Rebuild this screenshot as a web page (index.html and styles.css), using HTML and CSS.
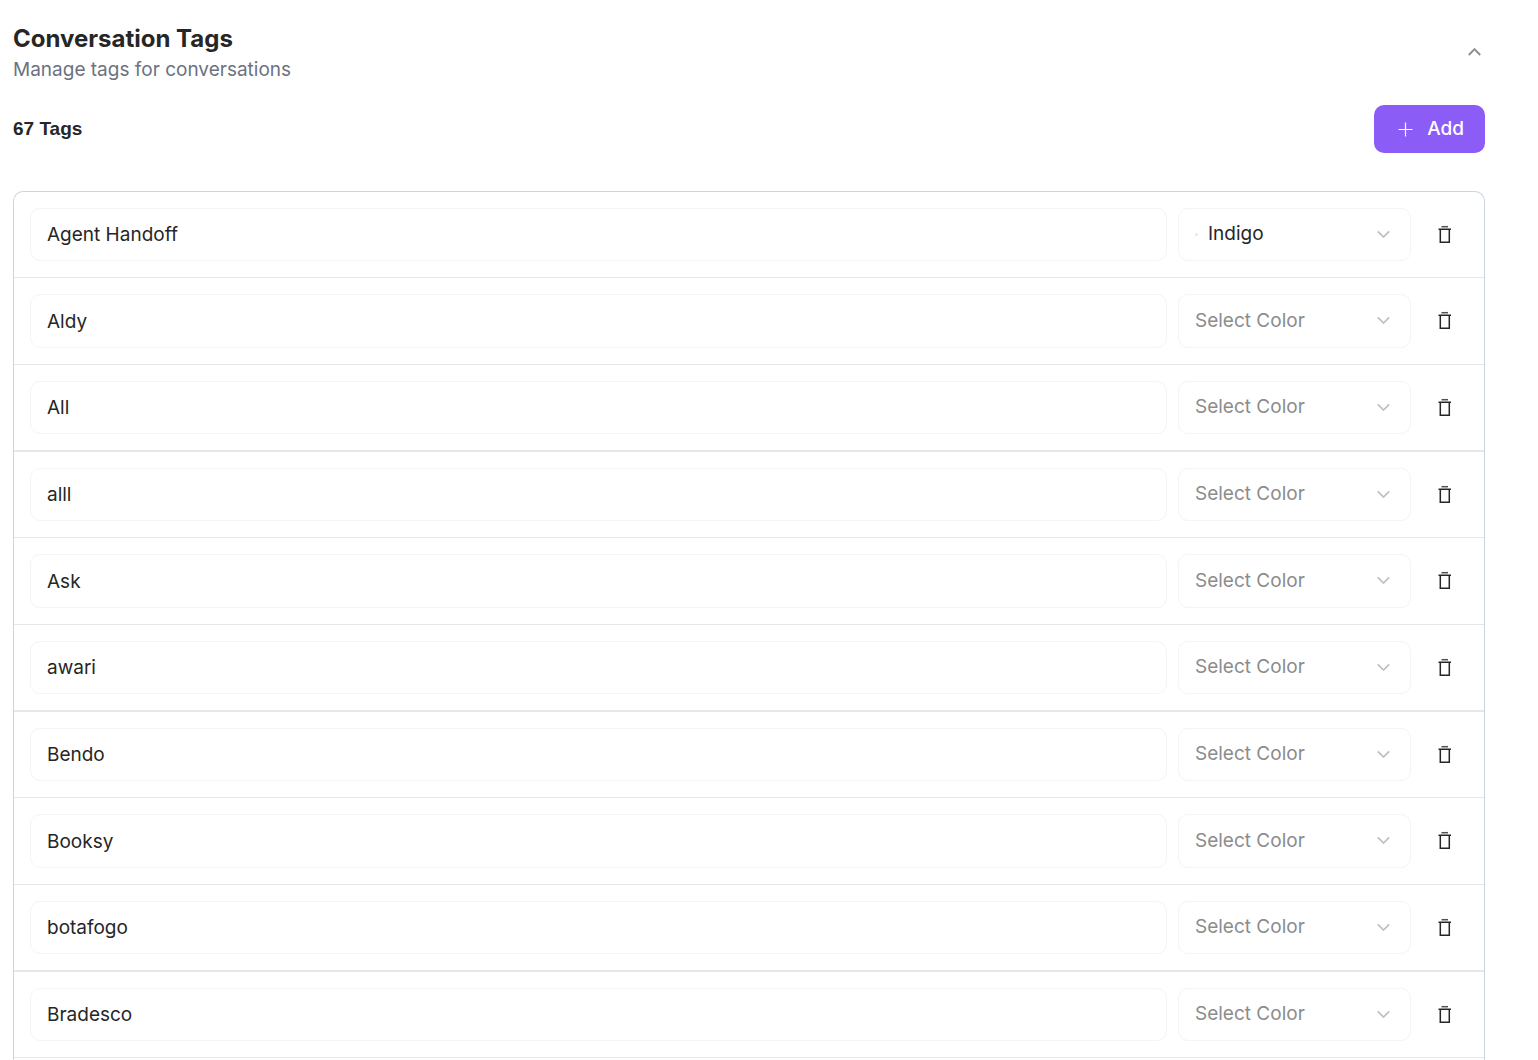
FILE: index.html
```html
<!DOCTYPE html>
<html lang="en">
<head>
  <meta charset="UTF-8">
  <meta name="viewport" content="width=device-width, initial-scale=1.0">
  <title>Conversation Tags</title>
  <link rel="stylesheet" href="styles.css">
</head>
<body>

  <!-- Shared icons -->
  <svg class="sprite" aria-hidden="true">
    <symbol id="icon-down" viewBox="0 0 14 8">
      <path d="M0.8 1.4 L6.5 7 L12.2 1.4" fill="none" stroke="currentColor" stroke-width="1.7"/>
    </symbol>
    <symbol id="icon-trash" viewBox="0 0 14 20">
      <path d="M3.5 1.7H10" fill="none" stroke="currentColor" stroke-width="1.5" opacity="0.8"/>
      <path d="M0.5 4.2H13M2.3 4.2V17.3H11.3V4.2" fill="none" stroke="currentColor" stroke-width="1.5"/>
    </symbol>
  </svg>

  <main class="panel">
    <!-- Header -->
    <header class="panel-header">
      <div>
        <h1 class="title">Conversation Tags</h1>
        <p class="subtitle">Manage tags for conversations</p>
      </div>
      <button class="collapse" type="button" aria-label="Collapse">
        <svg width="14" height="8" viewBox="0 0 14 8"><path d="M0.8 7 L6.5 1.2 L12.2 7" fill="none" stroke="currentColor" stroke-width="1.9"/></svg>
      </button>
    </header>

    <!-- Toolbar -->
    <div class="toolbar">
      <h2 class="count">67 Tags</h2>
      <button class="add" type="button">
        <svg width="15" height="15" viewBox="0 0 15 15"><path d="M7.5 0.5V14.5M0.5 7.5H14.5" fill="none" stroke="currentColor" stroke-width="1.2"/></svg>
        Add
      </button>
    </div>

    <!-- Tag list, filled in by script.js -->
    <ul class="tag-list" id="tagList"></ul>
  </main>

  <script src="script.js"></script>
</body>
</html>
```
FILE: styles.css
```css
* {
  box-sizing: border-box;
}

body {
  margin: 0;
  font-family: Inter, "Liberation Sans", sans-serif;
  font-size: 19px;
  color: #262626;
  background-color: #fff;
}

button,
input,
select {
  font: inherit;
  color: inherit;
}

button {
  padding: 0;
  border: none;
  background: none;
  cursor: pointer;
}

.sprite {
  display: none;
}

.panel {
  display: flex;
  flex-direction: column;
  min-height: 100vh;
  padding: 24px 53px 0 13px;
}

/* Header */
.panel-header {
  display: flex;
  justify-content: space-between;
  align-items: center;
}

.title {
  margin: 0;
  font-size: 24px;
  line-height: 30px;
  font-weight: 700;
}

.subtitle {
  margin: 0;
  line-height: 32px;
  color: #6b7280;
}

.collapse {
  display: flex;
  align-items: flex-start;
  height: 14px;
  margin-right: 3px;
  color: #8c8c8c;
}

/* Toolbar */
.toolbar {
  display: flex;
  justify-content: space-between;
  align-items: center;
  margin: 19px 0 38px;
}

.count {
  margin: 0;
  font-family: "Liberation Sans", Arial, sans-serif;
  font-size: 19px;
  line-height: 24px;
  font-weight: 700;
}

.add {
  display: flex;
  align-items: center;
  gap: 14px;
  height: 48px;
  padding: 0 21px 2px 24px;
  border-radius: 10px;
  background-color: #8b5cf6;
  color: #fff;
  font-weight: 500;
}

.add svg {
  margin-top: 2px;
}

/* Tag list */
.tag-list {
  flex: 1;
  margin: 0;
  padding: 0;
  list-style: none;
  border: 1px solid #cbd5e1;
  border-bottom: none;
  border-radius: 10px 10px 0 0;
}

.tag-row {
  display: flex;
  align-items: center;
  gap: 11px;
  padding: 16px;
  border-bottom: 1px solid #e5e7eb;
}

.tag-row:nth-child(3n) {
  border-bottom-width: 2px;
}

.tag-name,
.tag-color select {
  width: 100%;
  height: 53px;
  border: 1px solid #f3f4f6;
  border-radius: 10px;
  background-color: #fff;
  outline: none;
}

.tag-row:nth-child(3n + 2) .tag-name,
.tag-row:nth-child(3n + 2) select {
  height: 54px;
}

.tag-name {
  flex: 1;
  min-width: 0;
  padding: 0 16px;
}

.tag-color {
  position: relative;
  width: 233px;
}

.tag-color select {
  display: block;
  appearance: none;
  padding: 0 40px 2px 16px;
  color: #8c8c8c;
}

.tag-color.selected select {
  padding-left: 29px;
  color: #262626;
}

.tag-color svg {
  position: absolute;
  top: 22px;
  right: 20px;
  width: 14px;
  height: 8px;
  color: #bfbfbf;
  pointer-events: none;
}

.dot {
  position: absolute;
  top: 25px;
  left: 17px;
  width: 3px;
  height: 3px;
  border-radius: 50%;
  background-color: #e0e7ff;
}

.delete {
  display: flex;
  justify-content: center;
  width: 46px;
}

.delete svg {
  width: 14px;
  height: 20px;
}
```
FILE: script.js
```js
const tags = [
  { name: 'Agent Handoff', color: 'Indigo' },
  { name: 'Aldy' },
  { name: 'All' },
  { name: 'alll' },
  { name: 'Ask' },
  { name: 'awari' },
  { name: 'Bendo' },
  { name: 'Booksy' },
  { name: 'botafogo' },
  { name: 'Bradesco' }
];

const tagList = document.getElementById('tagList');

tags.forEach(function (tag) {
  const row = document.createElement('li');
  row.className = 'tag-row';
  row.innerHTML = `
    <input class="tag-name" type="text" aria-label="Tag name" value="${tag.name}">
    <div class="tag-color ${tag.color ? 'selected' : ''}">
      ${tag.color ? '<span class="dot"></span>' : ''}
      <select aria-label="Tag color">
        <option value="">Select Color</option>
        <option ${tag.color === 'Indigo' ? 'selected' : ''}>Indigo</option>
      </select>
      <svg><use href="#icon-down"/></svg>
    </div>
    <button class="delete" type="button" aria-label="Delete tag">
      <svg><use href="#icon-trash"/></svg>
    </button>`;
  tagList.appendChild(row);
});
```
